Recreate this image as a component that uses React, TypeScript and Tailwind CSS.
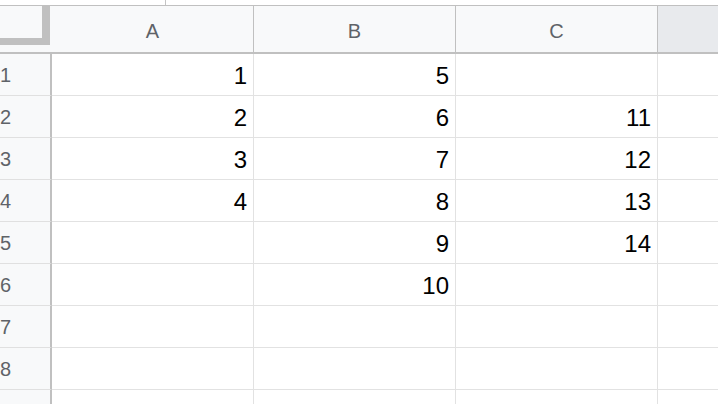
const columns = ["A", "B", "C"];

const data: (number | null)[][] = [
  [1, 5, null],
  [2, 6, 11],
  [3, 7, 12],
  [4, 8, 13],
  [null, 9, 14],
  [null, 10, null],
  [null, null, null],
  [null, null, null],
  [null, null, null],
  [null, null, null],
];

export default function App() {
  return (
    <div
      className="h-[404px] w-[718px] overflow-hidden bg-white"
      style={{ fontFamily: "'Liberation Sans', Arial, sans-serif" }}
    >
      {/* top strip */}
      <div className="h-[5px] pl-[165px]">
        <div className="h-full w-px bg-[#c4c4c4]" />
      </div>

      {/* column headers */}
      <div className="flex h-[49px] border-y border-[#c0c0c0] border-b-2 bg-[#f8f9fa]">
        <div className="w-[52px] shrink-0">
          <div className="h-[39px] w-[50px] border-r-[8px] border-b-[7px] border-[#c0c0c0] bg-[#f8f9fa]" />
        </div>
        {columns.map((c) => (
          <div
            key={c}
            className="flex w-[202px] shrink-0 items-center justify-center border-r border-[#c0c0c0] pt-[3px] text-[20px] text-[#5f6368]"
          >
            {c}
          </div>
        ))}
        <div className="flex-1 bg-[#e8eaed]" />
      </div>

      {/* rows */}
      {data.map((row, i) => (
        <div key={i} className="flex h-[42px]">
          <div className="flex w-[52px] shrink-0 items-center border-r-2 border-b border-[#c0c0c0] border-b-[#e0e0e0] bg-[#f8f9fa] pt-[1px] text-[20px] text-[#5f6368]">
            {i + 1}
          </div>
          {row.map((v, j) => (
            <div
              key={j}
              className="flex w-[202px] shrink-0 items-center justify-end border-r border-b border-[#e2e2e2] pt-[3px] pr-[6px] text-[24px] text-black"
            >
              {v ?? ""}
            </div>
          ))}
          <div className="flex-1 border-b border-[#e2e2e2]" />
        </div>
      ))}
    </div>
  );
}
